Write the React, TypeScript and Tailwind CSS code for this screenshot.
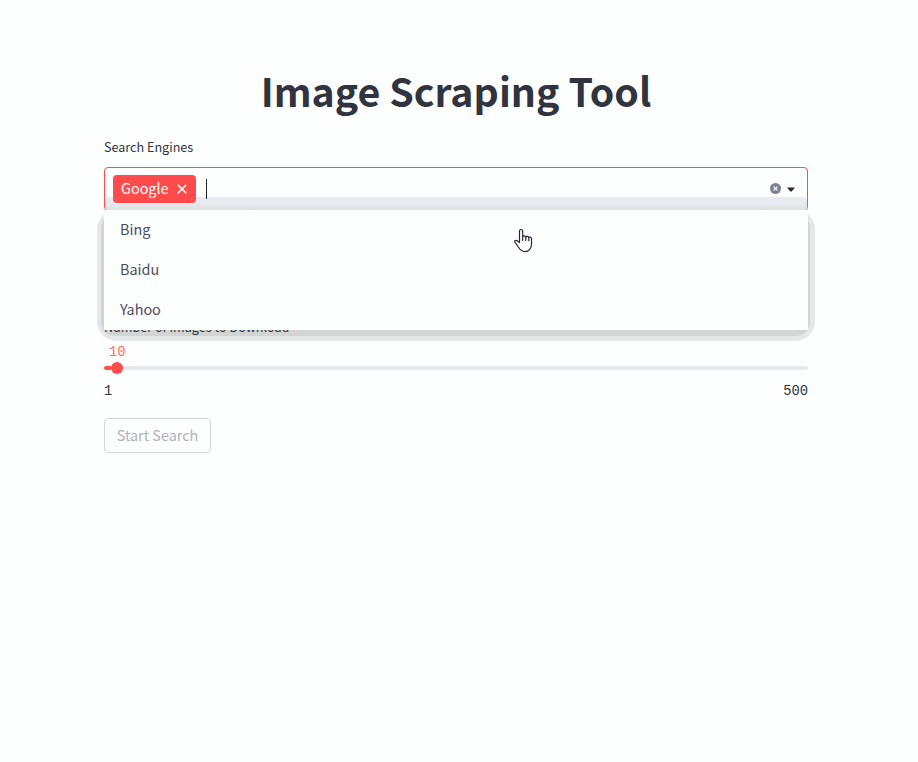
const sans = "font-['Noto_Sans_CJK_SC','Source_Sans_Pro',sans-serif]";
const mono = "font-['Liberation_Mono',monospace]";

const options = ["Bing", "Baidu", "Yahoo"];

function Menu() {
  return (
    <div className="absolute left-0 top-[43px] z-10 w-[704px]">
      <div className="absolute -left-[7px] -right-[7px] top-0 -bottom-[11px] rounded-[20px] bg-[#e5e7e8]" />
      <div className="absolute -left-[3px] -right-[2px] top-1 -bottom-[6px] rounded-[14px] bg-[#d3d5d4]" />
      <div className="absolute inset-x-0 top-full h-[6px] overflow-hidden text-[12.6px] leading-[18px] text-[#31333F]">
        <div className="-mt-[12px] whitespace-nowrap">Number of Images to Download</div>
      </div>
      <ul className="relative h-[120px] bg-[#fdfefe]">
        {options.map((name) => (
          <li key={name} className="flex h-10 items-center px-4 pb-[2px] text-[14.4px] leading-6 text-[#4b4d5a]">
            {name}
          </li>
        ))}
      </ul>
    </div>
  );
}

function HandCursor() {
  return (
    <svg className="absolute left-[410px] top-[61px] z-20" width="19" height="26" viewBox="0 0 19 26" fill="#fff" stroke="#26273a" strokeWidth="1.2" strokeLinejoin="round" strokeLinecap="round">
      <path d="M5.5 14.5V3.2c0-2.3 3.2-2.3 3.2 0v5.3c.3-1 2.8-.9 3.1.4.5-.9 2.7-.7 3 .5.7-.7 2.7-.2 2.7 1.4v5.4c0 4.5-2.8 7.4-6.5 7.4-3.2 0-4.8-1.8-6.3-4.1l-3.7-5.2c-.9-1.5.8-2.6 2.2-1.6z" />
      <path d="M8.7 8.5v4M11.8 9v3.5M14.8 9.7v3" fill="none" />
    </svg>
  );
}

export default function App() {
  return (
    <main className={`min-h-[762px] bg-[#fdfefe] pt-[63px] pl-[104px] text-[#31333F] ${sans}`}>
      <div className="w-[704px]">
        <h1 className="h-[53px] whitespace-nowrap text-center text-[39.3px] font-bold leading-[53px]">
          Image Scraping Tool
        </h1>
        <div className="mt-[22px] h-[18px] text-[12.6px] leading-[18px]">Search Engines</div>
        <div className="relative mt-[11px] h-[44px]">
          <div className="relative flex h-[44px] items-center overflow-hidden rounded-[4px] border border-[#ff4b4b] pl-2 pr-3">
            <div className="absolute inset-x-0 bottom-0 h-[13px] rounded-t-[4px] bg-linear-to-b from-[#e9ebf2] via-[#e7e9ee] to-[#dfe0e2]" />
            <div className="relative flex h-7 w-[83px] items-center rounded-[4px] bg-[#ff4b4b] pl-2 text-[14.4px] text-white">
              <span className="-mt-[2px] w-[56px]">Google</span>
              <svg width="10" height="10" viewBox="0 0 10 10" stroke="white" strokeWidth="1.6">
                <path d="M.8.8l8.4 8.4M9.2.8L.8 9.2" />
              </svg>
            </div>
            <div className="relative ml-[10px] h-5 w-px bg-[#262730]" />
            <svg className="relative ml-auto -mt-px" width="11" height="11" viewBox="0 0 11 11">
              <circle cx="5.5" cy="5.5" r="5.5" fill="#80828f" />
              <path d="M3.6 3.6l3.8 3.8M7.4 3.6L3.6 7.4" stroke="white" strokeWidth="1.2" />
            </svg>
            <svg className="relative ml-[6.5px]" width="8" height="5" viewBox="0 0 8 5">
              <path d="M0 .4h8L4.6 4.6H3.4z" fill="#262730" />
            </svg>
          </div>
          <Menu />
          <HandCursor />
        </div>
        <div className={`mt-[134px] pl-[5px] text-[13.8px] leading-[16px] text-[#ff6b5b] ${mono}`}>10</div>
        <div className="mt-px flex h-3 items-center">
          <div className="h-1 w-[6.5px] rounded-l-full bg-[#ff4b4b]" />
          <div className="h-3 w-3 rounded-full bg-[#ff4b4b]" />
          <div className="h-1 flex-1 rounded-r-full bg-[#e8e8ef]" />
        </div>
        <div className={`mt-[10px] flex justify-between text-[13.8px] leading-[16px] ${mono}`}>
          <span>1</span>
          <span>500</span>
        </div>
        <button className="mt-[18px] flex h-[35px] w-[107px] items-center justify-center rounded-[4px] border border-[#d5d6d8] pb-[2px] text-[14.4px] text-[#b0b1b7]">
          Start Search
        </button>
      </div>
    </main>
  );
}
